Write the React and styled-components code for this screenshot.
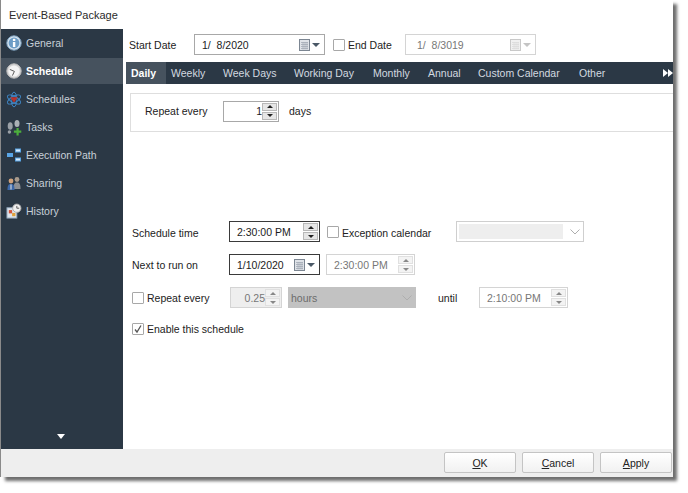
import React from 'react'
import styled, { createGlobalStyle } from 'styled-components'

const GlobalStyle = createGlobalStyle`
html, body {
  margin: 0;
  padding: 0;
  background: #fff;
}
body {
  font-family: "Liberation Sans", Arial, sans-serif;
  font-size: 10.5px;
  color: #222;
}
`

const InfoIcon = () => (
  <svg width="16" height="16" viewBox="0 0 16 16">
    <circle cx="8" cy="8" r="7.2" fill="#d5e3ef" stroke="#7ea2c0" />
    <circle cx="8" cy="8" r="5.4" fill="#6d9dc6" />
    <rect x="6.9" y="7" width="2.4" height="5" fill="#fff" />
    <rect x="6.9" y="3.8" width="2.4" height="2.2" fill="#fff" />
  </svg>
)

const ClockIcon = () => (
  <svg width="16" height="16" viewBox="0 0 16 16">
    <circle cx="8" cy="8" r="7.2" fill="#d6d6d6" stroke="#bcbcbc" />
    <circle cx="8" cy="8" r="5.6" fill="#f4f4f4" />
    <path d="M8.4 8.4 L3.8 6.4 M8.4 8.4 L6.4 12.6" stroke="#5a5a5a" strokeWidth="1" fill="none" />
  </svg>
)

const AtomIcon = () => (
  <svg width="17" height="17" viewBox="0 0 17 17" fill="none">
    <ellipse cx="8.5" cy="8.5" rx="7.8" ry="3.4" stroke="#3f86c6" transform="rotate(30 8.5 8.5)" />
    <ellipse cx="8.5" cy="8.5" rx="7.8" ry="3.4" stroke="#3f86c6" transform="rotate(-30 8.5 8.5)" />
    <ellipse cx="8.5" cy="8.5" rx="7.8" ry="3" stroke="#3f86c6" transform="rotate(90 8.5 8.5)" />
    <path d="M4.5 6 L12.5 6 L8.5 12 Z" fill="#b8322c" />
  </svg>
)

const TasksIcon = () => (
  <svg width="16" height="17" viewBox="0 0 16 17">
    <ellipse cx="4.2" cy="7" rx="2.5" ry="3.8" fill="#9aa0a6" />
    <ellipse cx="3.4" cy="13" rx="1.7" ry="1.7" fill="#9aa0a6" />
    <ellipse cx="11" cy="4.5" rx="2.5" ry="3.6" fill="#aab0b5" />
    <path d="M10.5 9 h2.2 v2.6 h2.6 v2.2 h-2.6 v2.6 h-2.2 v-2.6 h-2.6 v-2.2 h2.6 z" fill="#4caf3c" />
  </svg>
)

const PathIcon = () => (
  <svg width="16" height="16" viewBox="0 0 16 16">
    <rect x="1" y="6" width="6" height="4" fill="#5aa5e6" />
    <rect x="9" y="1.5" width="6" height="4" fill="#5aa5e6" />
    <rect x="9" y="10.5" width="6" height="4" fill="#5aa5e6" />
    <rect x="10" y="2.5" width="4" height="2" fill="#d9ecfb" />
    <rect x="10" y="11.5" width="4" height="2" fill="#d9ecfb" />
  </svg>
)

const SharingIcon = () => (
  <svg width="16" height="16" viewBox="0 0 16 16">
    <circle cx="11" cy="4.5" r="2.4" fill="#a89a8c" />
    <path d="M7.5 14 C7.5 9 8.5 7.5 11 7.5 C13.5 7.5 14.5 9 14.5 14 Z" fill="#8d8f92" />
    <circle cx="5" cy="6" r="2.4" fill="#d0a27c" />
    <path d="M1.5 15 C1.5 10 2.5 9 5 9 C7.5 9 8.5 10 8.5 15 Z" fill="#3c68a8" />
    <path d="M5 9.5 V14.5" stroke="#e8e8e8" />
  </svg>
)

const HistoryIcon = () => (
  <svg width="17" height="17" viewBox="0 0 17 17">
    <rect x="1" y="4.5" width="10.5" height="11" fill="#dfe6ee" stroke="#8ea3b8" />
    <rect x="3" y="7" width="3.5" height="3.5" fill="#d4553b" />
    <rect x="6.5" y="10" width="3.5" height="3.5" fill="#e0a13c" />
    <circle cx="11.5" cy="5" r="4.4" fill="#efefef" stroke="#aaa" />
    <path d="M11.5 2.6 V5 H14" stroke="#555" fill="none" />
  </svg>
)

const CalendarIcon = ({ $muted }) => (
  <svg width="11" height="12" viewBox="0 0 11 12">
    <rect x="0.5" y="0.5" width="10" height="11" fill={$muted ? '#f0f0f0' : '#dfe3e8'} stroke={$muted ? '#c9c9c9' : '#7c8692'} />
    <path d="M2 3.5 H9 M2 5.5 H9 M2 7.5 H9 M2 9.5 H9 M4 3 V10.5 M6 3 V10.5 M8 3 V10.5" stroke={$muted ? '#dadada' : '#a3abb5'} strokeWidth="0.8" />
  </svg>
)

const Chevron = () => (
  <svg width="10" height="6" viewBox="0 0 10 6" fill="none">
    <path d="M0.5 0.5 L5 5 L9.5 0.5" stroke="#aeaeae" />
  </svg>
)

const Tick = () => (
  <svg width="10" height="10" viewBox="0 0 10 10" fill="none">
    <path d="M2 5.5 L4 8 L8 1.5" stroke="#555" strokeWidth="1.3" />
  </svg>
)

const Page = styled.div`
  width: 688px;
  height: 493px;
  overflow: hidden;
  background: #fff;
`
const Window = styled.div`
  width: 672px;
  height: 477px;
  margin-left: 1px;
  display: flex;
  flex-direction: column;
  background: #fff;
  box-shadow: 4px 4px 3px #6f6f6f, -1px 0 0 #8a8a8a;
`
const TitleBar = styled.div`
  height: 29px;
  flex: none;
  display: flex;
  align-items: center;
  padding-left: 8px;
  font-size: 11px;
  color: #2b2b2b;
`
const Body = styled.div`
  flex: 1;
  min-height: 0;
  display: flex;
`
const Sidebar = styled.nav`
  width: 122px;
  flex: none;
  background: #2b3845;
  display: flex;
  flex-direction: column;
  gap: 2px;
  padding-top: 1px;
  box-sizing: border-box;
`
const NavItem = styled.div`
  height: 26px;
  flex: none;
  display: flex;
  align-items: center;
  gap: 4px;
  padding-left: 5px;
  color: ${p => (p.$active ? '#fff' : '#c8d0d8')};
  font-weight: ${p => (p.$active ? 700 : 400)};
  background: ${p => (p.$active ? '#46525e' : 'transparent')};
`
const NavIconBox = styled.span`
  width: 16px;
  height: 17px;
  display: flex;
  align-items: center;
  justify-content: center;
`
const NavArrow = styled.div`
  margin: auto 0 10px -3px;
  align-self: center;
  width: 0;
  height: 0;
  border-left: 4.5px solid transparent;
  border-right: 4.5px solid transparent;
  border-top: 5px solid #fff;
`
const Main = styled.main`
  flex: 1;
  min-width: 0;
  display: flex;
  flex-direction: column;
`
const DateRow = styled.div`
  height: 21px;
  margin-top: 5px;
  display: flex;
  align-items: center;
  padding-left: 6px;
`
const DateLabel = styled.span`
  width: ${p => p.$w}px;
  flex: none;
  white-space: nowrap;
`
const Field = styled.div`
  width: ${p => p.$w}px;
  height: 21px;
  box-sizing: border-box;
  flex: none;
  display: flex;
  align-items: center;
  background: ${p => (p.$grey ? '#eeeeee' : '#fff')};
  border: 1px solid ${p => (p.$strong ? '#3a3a3a' : p.$muted ? '#d4d4d4' : '#a8a8a8')};
  color: ${p => (p.$muted ? '#777' : '#1c1c1c')};
  padding-left: ${p => p.$pad ?? 7}px;
  margin-left: ${p => p.$ml ?? 0}px;
`
const FieldText = styled.span`
  flex: 1;
  text-align: ${p => (p.$right ? 'right' : 'left')};
  white-space: pre;
`
const DropArrow = styled.span`
  width: 0;
  height: 0;
  margin: 0 4px 0 2px;
  border-left: 4px solid transparent;
  border-right: 4px solid transparent;
  border-top: 4px solid ${p => (p.$muted ? '#c4c4c4' : '#4a5866')};
`
const Check = styled.span`
  width: 12px;
  height: 12px;
  box-sizing: border-box;
  flex: none;
  display: flex;
  align-items: center;
  justify-content: center;
  border: 1px solid #a8a8a8;
  border-radius: 1px;
  background: #fff;
  margin-left: ${p => p.$ml ?? 0}px;
  margin-right: 3px;
`
const TabBar = styled.div`
  height: 22px;
  margin: 7px 0 0 3px;
  flex: none;
  display: flex;
  align-items: center;
  background: #2b3845;
  color: #d3dae0;
`
const Tab = styled.div`
  width: ${p => p.$w}px;
  height: 100%;
  flex: none;
  box-sizing: border-box;
  display: flex;
  align-items: center;
  padding-left: 5px;
  color: ${p => (p.$active ? '#fff' : '#d3dae0')};
  font-weight: ${p => (p.$active ? 700 : 400)};
  background: ${p => (p.$active ? '#46525e' : 'transparent')};
`
const TabMore = styled.div`
  margin-left: auto;
  display: flex;
`
const TabMoreArrow = styled.span`
  width: 0;
  height: 0;
  border-top: 4px solid transparent;
  border-bottom: 4px solid transparent;
  border-left: 5px solid #fff;
`
const RepeatPanel = styled.div`
  height: 39px;
  margin: 9px 0 0 7px;
  flex: none;
  box-sizing: border-box;
  border: 1px solid #dedede;
  border-right: none;
  display: flex;
  align-items: center;
  padding: 0 0 3px 14px;
`
const RepeatLabel = styled.span`
  width: 78px;
  flex: none;
`
const Spin = styled.div`
  width: 15px;
  align-self: stretch;
  margin: 1px 1px 1px 0;
  flex: none;
  display: flex;
  flex-direction: column;
  gap: 1px;
`
const SpinBtn = styled.div`
  flex: 1;
  display: flex;
  align-items: center;
  justify-content: center;
  background: ${p => (p.$muted ? '#f3f3f3' : '#e6e6e6')};
  border: 1px solid ${p => (p.$muted ? '#e0e0e0' : '#b8b8b8')};
  &::after {
    content: '';
    width: 0;
    height: 0;
    border-left: 3px solid transparent;
    border-right: 3px solid transparent;
    ${p => (p.$down ? 'border-top' : 'border-bottom')}: 3px solid ${p => (p.$muted ? '#888' : '#222')};
  }
`
const Unit = styled.span`
  margin-left: 10px;
`
const Form = styled.div`
  margin: 89px 0 0 9px;
  display: flex;
  flex-direction: column;
`
const FormRow = styled.div`
  height: 21px;
  margin-bottom: ${p => p.$gap ?? 0}px;
  display: flex;
  align-items: center;
`
const FormLabel = styled.span`
  width: ${p => p.$w ?? 97}px;
  flex: none;
  white-space: nowrap;
  margin-left: ${p => p.$ml ?? 0}px;
  padding-top: ${p => (p.$low ? 2 : 0)}px;
`
const Select = styled.div`
  width: ${p => p.$w}px;
  height: 21px;
  box-sizing: border-box;
  flex: none;
  display: flex;
  align-items: center;
  margin-left: ${p => p.$ml ?? 0}px;
  border: 1px solid ${p => (p.$filled ? '#c2c2c2' : '#cfcfcf')};
  background: ${p => (p.$filled ? '#c2c2c2' : '#fff')};
  color: #6c6c6c;
  padding: 2px 3px 2px 2px;
`
const SelectValue = styled.span`
  flex: 1;
  align-self: stretch;
  display: flex;
  align-items: center;
  background: ${p => (p.$blank ? '#eeeeee' : 'transparent')};
  margin-right: 7px;
`
const Footer = styled.footer`
  height: 28px;
  flex: none;
  box-sizing: border-box;
  background: #eeeeee;
  display: flex;
  justify-content: flex-end;
  align-items: flex-start;
  gap: 6px;
  padding: 3px 1px 0 0;
`
const Button = styled.button`
  width: 72px;
  height: 21px;
  padding: 0;
  font: inherit;
  color: #222;
  border: 1px solid #c4c4c4;
  border-radius: 2px;
  background: linear-gradient(#ffffff, #f1f1f1);
`

const navItems = [
  ['General', <InfoIcon />],
  ['Schedule', <ClockIcon />],
  ['Schedules', <AtomIcon />],
  ['Tasks', <TasksIcon />],
  ['Execution Path', <PathIcon />],
  ['Sharing', <SharingIcon />],
  ['History', <HistoryIcon />],
]

const tabs = [
  ['Daily', 40],
  ['Weekly', 52],
  ['Week Days', 71],
  ['Working Day', 79],
  ['Monthly', 55],
  ['Annual', 50],
  ['Custom Calendar', 101],
  ['Other', 60],
]

const Spinner = ({ $muted }) => (
  <Spin>
    <SpinBtn $muted={$muted} />
    <SpinBtn $muted={$muted} $down />
  </Spin>
)

const App = () => {
  return (
    <Page>
      <GlobalStyle />
      <Window>
        <TitleBar>Event-Based Package</TitleBar>
        <Body>
          <Sidebar>
            {navItems.map(([label, icon]) => (
              <NavItem key={label} $active={label === 'Schedule'}>
                <NavIconBox>{icon}</NavIconBox>
                {label}
              </NavItem>
            ))}
            <NavArrow />
          </Sidebar>
          <Main>
            <DateRow>
              <DateLabel $w={65}>Start Date</DateLabel>
              <Field $w={131}>
                <FieldText>{'1/  8/2020'}</FieldText>
                <CalendarIcon />
                <DropArrow />
              </Field>
              <Check $ml={8} />
              <DateLabel $w={57}>End Date</DateLabel>
              <Field $w={131} $muted $pad={11}>
                <FieldText>{'1/  8/3019'}</FieldText>
                <CalendarIcon $muted />
                <DropArrow $muted />
              </Field>
            </DateRow>
            <TabBar>
              {tabs.map(([label, w]) => (
                <Tab key={label} $w={w} $active={label === 'Daily'}>{label}</Tab>
              ))}
              <TabMore>
                <TabMoreArrow />
                <TabMoreArrow />
              </TabMore>
            </TabBar>
            <RepeatPanel>
              <RepeatLabel>Repeat every</RepeatLabel>
              <Field $w={56} $pad={0}>
                <FieldText $right>1</FieldText>
                <Spinner />
              </Field>
              <Unit>days</Unit>
            </RepeatPanel>
            <Form>
              <FormRow $gap={12}>
                <FormLabel $low>Schedule time</FormLabel>
                <Field $w={91} $strong>
                  <FieldText>2:30:00 PM</FieldText>
                  <Spinner />
                </Field>
                <Check $ml={7} />
                <FormLabel $w={114} $low>Exception calendar</FormLabel>
                <Select $w={128}>
                  <SelectValue $blank />
                  <Chevron />
                </Select>
              </FormRow>
              <FormRow $gap={12}>
                <FormLabel>Next to run on</FormLabel>
                <Field $w={91} $strong>
                  <FieldText>1/10/2020</FieldText>
                  <CalendarIcon />
                  <DropArrow />
                </Field>
                <Field $w={89} $ml={6} $muted>
                  <FieldText>2:30:00 PM</FieldText>
                  <Spinner $muted />
                </Field>
              </FormRow>
              <FormRow $gap={10}>
                <Check />
                <FormLabel $w={83}>Repeat every</FormLabel>
                <Field $w={52} $muted $grey $pad={0}>
                  <FieldText $right>0.25</FieldText>
                  <Spinner $muted />
                </Field>
                <Select $w={128} $ml={6} $filled>
                  <SelectValue>hours</SelectValue>
                  <Chevron />
                </Select>
                <FormLabel $w={41} $ml={22}>until</FormLabel>
                <Field $w={89} $muted>
                  <FieldText>2:10:00 PM</FieldText>
                  <Spinner $muted />
                </Field>
              </FormRow>
              <FormRow>
                <Check><Tick /></Check>
                Enable this schedule
              </FormRow>
            </Form>
          </Main>
        </Body>
        <Footer>
          <Button><u>O</u>K</Button>
          <Button><u>C</u>ancel</Button>
          <Button><u>A</u>pply</Button>
        </Footer>
      </Window>
    </Page>
  )
}

export default App
